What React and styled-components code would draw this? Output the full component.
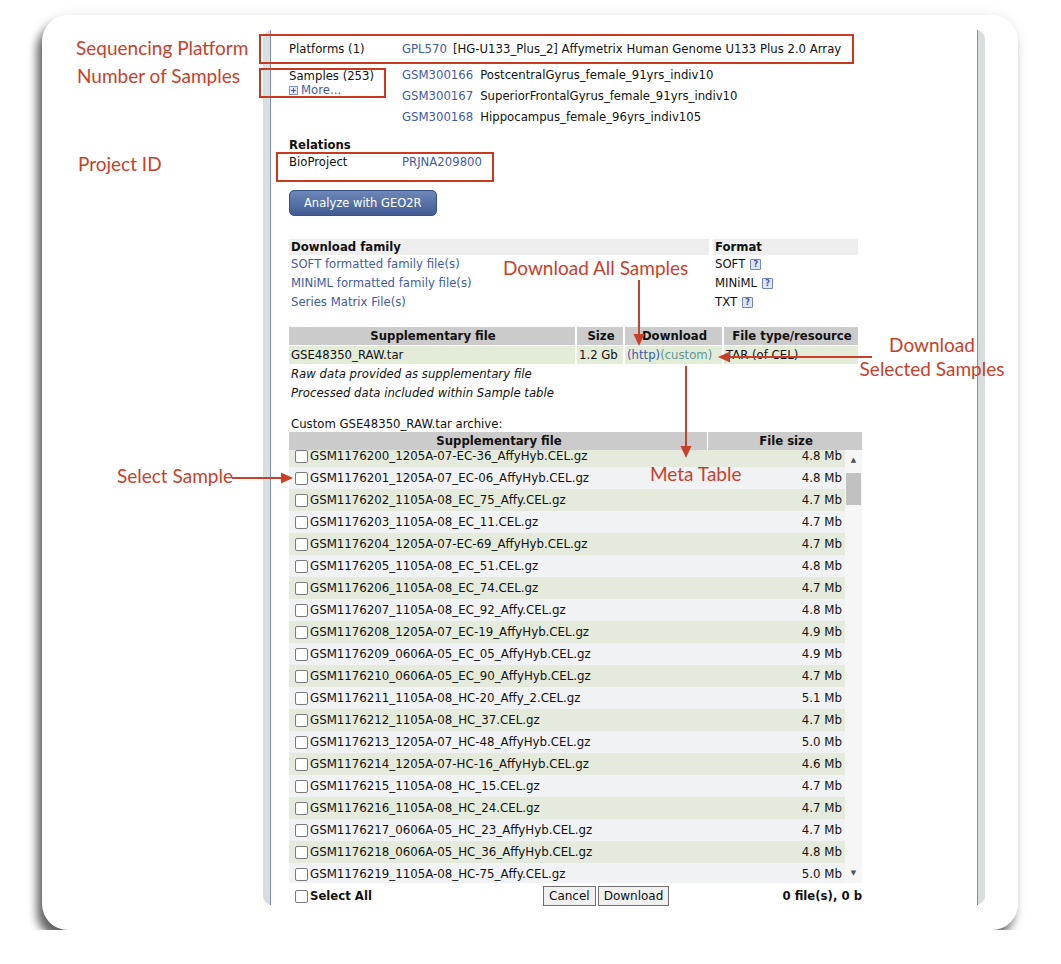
import React from "react";
import styled, { createGlobalStyle } from "styled-components";

const GlobalStyle = createGlobalStyle`
  html, body { margin: 0; padding: 0; background: #ffffff; }
  body {
    font-family: "DejaVu Sans", Verdana, sans-serif;
    font-size: 11.7px;
    color: #111;
  }
  * { box-sizing: border-box; }
`;

const RED = "#c9402a";
const LINK = "#3f5aa8";

const Card = styled.div`
  position: relative;
  width: 976px;
  height: 915px;
  margin: 15px 0 0 42px;
  padding: 15px 33px 25px 221px;
  background: #fff;
  border-radius: 26px;
  box-shadow: -5px 9px 10px rgba(0, 0, 0, 0.6), 0 0 14px rgba(0, 0, 0, 0.08);
`;

const Frame = styled.div`
  width: 722px;
  height: 875px;
  background: #d8dddd;
  border-radius: 9px;
  padding: 0 7px;
  display: flex;
`;

const Content = styled.div`
  flex: 1;
  background: #fff;
  border-left: 1px solid #7a8bcb;
  border-right: 1px solid #7a8bcb;
  padding: 9px 0 0 18px;
  display: flex;
  flex-direction: column;
  align-items: flex-start;
  & > * { flex-shrink: 0; }
`;

const DefRow = styled.div`
  display: grid;
  grid-template-columns: 113px auto;
  line-height: ${(p) => p.$lh || 20}px;
  margin-top: ${(p) => p.$mt || 0}px;
`;

const LabelCol = styled.div`
  padding-top: 4px;
  line-height: 14px;
`;

const MoreLink = styled.div`
  color: ${LINK};
  display: flex;
  align-items: center;
  gap: 3px;
`;

const PlusBox = styled.span`
  width: 9px;
  height: 9px;
  border: 1px solid #8094c4;
  background: #e4e9f5;
  position: relative;
  &::before, &::after {
    content: "";
    position: absolute;
    background: #3f5aa8;
  }
  &::before { left: 1px; right: 1px; top: 3px; height: 1px; }
  &::after { top: 1px; bottom: 1px; left: 3px; width: 1px; }
`;

const Link = styled.span`
  color: ${(p) => p.$color || LINK};
  margin-right: ${(p) => p.$mr || 0}px;
`;

const SectionTitle = styled.div`
  font-weight: bold;
  line-height: 17px;
  margin-top: 9px;
`;

const GeoButton = styled.div`
  margin-top: 19px;
  height: 26px;
  padding: 0 14px;
  display: flex;
  align-items: center;
  border-radius: 5px;
  border: 1px solid #34508a;
  background: linear-gradient(#6d87b8, #405c92);
  color: #fff;
  font-size: 11.5px;
`;

const FamilyTable = styled.div`
  margin-top: 23px;
  display: grid;
  grid-template-columns: 420px 145px;
  column-gap: 4px;
`;

const HeadCell = styled.div`
  background: ${(p) => p.$bg || "#eeeeee"};
  font-weight: bold;
  height: ${(p) => p.$h || 16}px;
  line-height: ${(p) => p.$h || 16}px;
  padding-left: 2px;
  text-align: ${(p) => p.$align || "left"};
`;

const Cell = styled.div`
  height: 19px;
  line-height: 19px;
  padding-left: 2px;
  display: flex;
  align-items: center;
  gap: 5px;
`;

const Help = styled.span`
  width: 11px;
  height: 11px;
  border: 1px solid #6d86c0;
  background: #dfe6f5;
  color: #3f5aa8;
  font-size: 8px;
  font-weight: bold;
  line-height: 9px;
  text-align: center;
  border-radius: 1px;
`;

const SuppTable = styled.div`
  margin-top: 15px;
  display: grid;
  grid-template-columns: 286px 46px 97px 134px;
  column-gap: 2px;
  row-gap: 1px;
`;

const DataCell = styled.div`
  background: #e3ebd9;
  height: 18px;
  line-height: 18px;
  padding-left: 2px;
  white-space: nowrap;
`;

const Note = styled.div`
  font-style: italic;
  line-height: 19px;
  padding-left: 2px;
  margin-top: ${(p) => p.$mt || 0}px;
`;

const Plain = styled.div`
  line-height: 16px;
  padding-left: 2px;
  margin-top: 13px;
`;

const MetaTable = styled.div`
  width: 573px;
  display: flex;
  flex-direction: column;
  & > * { flex-shrink: 0; }
`;

const MetaHead = styled.div`
  display: grid;
  grid-template-columns: 418px 1fr;
  column-gap: 1px;
`;

const ListArea = styled.div`
  display: flex;
  height: 433px;
`;

const Viewport = styled.div`
  width: 556px;
  overflow: hidden;
`;

const RowsInner = styled.div`
  margin-top: -5px;
`;

const FileRow = styled.div`
  height: 22px;
  display: flex;
  align-items: center;
  padding: 0 3px 0 6px;
  background: ${(p) => (p.$alt ? "#f1f2f4" : "#e4ebdc")};
  font-size: 11.8px;
`;

const Check = styled.span`
  width: 13px;
  height: 13px;
  border: 1px solid #7a7a7a;
  border-radius: 2px;
  background: #fff;
  margin-right: 2px;
  flex: none;
`;

const FileName = styled.span`
  flex: 1;
  white-space: nowrap;
`;

const Size = styled.span`
  white-space: nowrap;
`;

const Scrollbar = styled.div`
  width: 17px;
  background: #f6f6f6;
  display: flex;
  flex-direction: column;
  align-items: center;
`;

const ScrollArrow = styled.div`
  height: 20px;
  display: flex;
  align-items: center;
  justify-content: center;
  color: #505050;
  font-size: 7px;
`;

const Thumb = styled.div`
  width: 15px;
  height: 32px;
  margin-top: 3px;
  background: #c1c1c1;
`;

const Spacer = styled.div`
  flex: 1;
`;

const Footer = styled.div`
  display: grid;
  grid-template-columns: 254px auto 1fr;
  align-items: center;
  height: 26px;
`;

const SelectAll = styled.div`
  display: flex;
  align-items: center;
  padding-left: 6px;
  font-weight: bold;
`;

const Buttons = styled.div`
  display: flex;
  gap: 2px;
`;

const GrayButton = styled.div`
  height: 20px;
  padding: 0 ${(p) => p.$px || 5}px;
  border: 1px solid #707070;
  background: #f0f0f0;
  line-height: 18px;
  font-size: 12px;
`;

const Totals = styled.div`
  text-align: right;
  font-weight: bold;
`;

/* ---------- annotation overlay ---------- */

const Note2 = styled.div`
  position: absolute;
  left: ${(p) => p.$x}px;
  top: ${(p) => p.$y}px;
  width: ${(p) => (p.$w ? `${p.$w}px` : "auto")};
  font-family: Lato, "Open Sans", sans-serif;
  font-size: 19px;
  line-height: ${(p) => p.$lh || 22}px;
  color: ${RED};
  white-space: nowrap;
  text-align: ${(p) => p.$align || "left"};
`;

const RedBox = styled.div`
  position: absolute;
  left: ${(p) => p.$x}px;
  top: ${(p) => p.$y}px;
  width: ${(p) => p.$w}px;
  height: ${(p) => p.$h}px;
  border: 2px solid #c8391f;
`;

const ArrowSvg = styled.svg`
  position: absolute;
  left: ${(p) => p.$x}px;
  top: ${(p) => p.$y}px;
  overflow: visible;
`;

function Arrow({ x, y, len, dir }) {
  const head = 12;
  const half = 5.5;
  if (dir === "down") {
    return (
      <ArrowSvg $x={x - 6} $y={y} width="12" height={len}>
        <line x1="6" y1="0" x2="6" y2={len - head + 1} stroke={RED} strokeWidth="2" />
        <polygon points={`${6 - half},${len - head} ${6 + half},${len - head} 6,${len}`} fill={RED} />
      </ArrowSvg>
    );
  }
  if (dir === "left") {
    return (
      <ArrowSvg $x={x} $y={y - 6} width={len} height="12">
        <line x1={head - 1} y1="6" x2={len} y2="6" stroke={RED} strokeWidth="2" />
        <polygon points={`0,6 ${head},${6 - half} ${head},${6 + half}`} fill={RED} />
      </ArrowSvg>
    );
  }
  return (
    <ArrowSvg $x={x} $y={y - 6} width={len} height="12">
      <line x1="0" y1="6" x2={len - head + 1} y2="6" stroke={RED} strokeWidth="2" />
      <polygon points={`${len},6 ${len - head},${6 - half} ${len - head},${6 + half}`} fill={RED} />
    </ArrowSvg>
  );
}

const files = [
  ["GSM1176200_1205A-07-EC-36_AffyHyb.CEL.gz", "4.8 Mb"],
  ["GSM1176201_1205A-07_EC-06_AffyHyb.CEL.gz", "4.8 Mb"],
  ["GSM1176202_1105A-08_EC_75_Affy.CEL.gz", "4.7 Mb"],
  ["GSM1176203_1105A-08_EC_11.CEL.gz", "4.7 Mb"],
  ["GSM1176204_1205A-07-EC-69_AffyHyb.CEL.gz", "4.7 Mb"],
  ["GSM1176205_1105A-08_EC_51.CEL.gz", "4.8 Mb"],
  ["GSM1176206_1105A-08_EC_74.CEL.gz", "4.7 Mb"],
  ["GSM1176207_1105A-08_EC_92_Affy.CEL.gz", "4.8 Mb"],
  ["GSM1176208_1205A-07_EC-19_AffyHyb.CEL.gz", "4.9 Mb"],
  ["GSM1176209_0606A-05_EC_05_AffyHyb.CEL.gz", "4.9 Mb"],
  ["GSM1176210_0606A-05_EC_90_AffyHyb.CEL.gz", "4.7 Mb"],
  ["GSM1176211_1105A-08_HC-20_Affy_2.CEL.gz", "5.1 Mb"],
  ["GSM1176212_1105A-08_HC_37.CEL.gz", "4.7 Mb"],
  ["GSM1176213_1205A-07_HC-48_AffyHyb.CEL.gz", "5.0 Mb"],
  ["GSM1176214_1205A-07-HC-16_AffyHyb.CEL.gz", "4.6 Mb"],
  ["GSM1176215_1105A-08_HC_15.CEL.gz", "4.7 Mb"],
  ["GSM1176216_1105A-08_HC_24.CEL.gz", "4.7 Mb"],
  ["GSM1176217_0606A-05_HC_23_AffyHyb.CEL.gz", "4.7 Mb"],
  ["GSM1176218_0606A-05_HC_36_AffyHyb.CEL.gz", "4.8 Mb"],
  ["GSM1176219_1105A-08_HC-75_Affy.CEL.gz", "5.0 Mb"],
];

const samples = [
  ["GSM300166", "PostcentralGyrus_female_91yrs_indiv10"],
  ["GSM300167", "SuperiorFrontalGyrus_female_91yrs_indiv10"],
  ["GSM300168", "Hippocampus_female_96yrs_indiv105"],
];

const family = [
  ["SOFT formatted family file(s)", "SOFT"],
  ["MINiML formatted family file(s)", "MINiML"],
  ["Series Matrix File(s)", "TXT"],
];

export default function App() {
  return (
    <>
      <GlobalStyle />
      <Card>
        <Frame>
          <Content>
            <DefRow $lh={20}>
              <div>Platforms (1)</div>
              <div>
                <Link $mr={6}>GPL570</Link>[HG-U133_Plus_2] Affymetrix Human Genome U133 Plus 2.0 Array
              </div>
            </DefRow>
            <DefRow $lh={21} $mt={6}>
              <LabelCol>
                <div>Samples (253)</div>
                <MoreLink>
                  <PlusBox />
                  More...
                </MoreLink>
              </LabelCol>
              <div>
                {samples.map(([id, name]) => (
                  <div key={id}>
                    <Link $mr={7}>{id}</Link>
                    {name}
                  </div>
                ))}
              </div>
            </DefRow>
            <SectionTitle>Relations</SectionTitle>
            <DefRow $lh={17}>
              <div>BioProject</div>
              <Link>PRJNA209800</Link>
            </DefRow>
            <GeoButton>Analyze with GEO2R</GeoButton>

            <FamilyTable>
              <HeadCell>Download family</HeadCell>
              <HeadCell>Format</HeadCell>
              {family.map(([label, fmt]) => (
                <React.Fragment key={fmt}>
                  <Cell>
                    <Link>{label}</Link>
                  </Cell>
                  <Cell>
                    {fmt}
                    <Help>?</Help>
                  </Cell>
                </React.Fragment>
              ))}
            </FamilyTable>

            <SuppTable>
              <HeadCell $bg="#cbcbcb" $h={18} $align="center">Supplementary file</HeadCell>
              <HeadCell $bg="#cbcbcb" $h={18} $align="center">Size</HeadCell>
              <HeadCell $bg="#cbcbcb" $h={18} $align="center">Download</HeadCell>
              <HeadCell $bg="#cbcbcb" $h={18} $align="center">File type/resource</HeadCell>
              <DataCell>GSE48350_RAW.tar</DataCell>
              <DataCell>1.2 Gb</DataCell>
              <DataCell>
                <Link>(http)</Link>
                <Link $color="#5f9595">(custom)</Link>
              </DataCell>
              <DataCell>TAR (of CEL)</DataCell>
            </SuppTable>
            <Note $mt={1}>Raw data provided as supplementary file</Note>
            <Note>Processed data included within Sample table</Note>

            <Plain>Custom GSE48350_RAW.tar archive:</Plain>
            <MetaTable>
              <MetaHead>
                <HeadCell $bg="#cbcbcb" $h={18} $align="center">Supplementary file</HeadCell>
                <HeadCell $bg="#cbcbcb" $h={18} $align="center">File size</HeadCell>
              </MetaHead>
              <ListArea>
                <Viewport>
                  <RowsInner>
                    {files.map(([name, size], i) => (
                      <FileRow key={name} $alt={i % 2 === 1}>
                        <Check />
                        <FileName>{name}</FileName>
                        <Size>{size}</Size>
                      </FileRow>
                    ))}
                  </RowsInner>
                </Viewport>
                <Scrollbar>
                  <ScrollArrow>▲</ScrollArrow>
                  <Thumb />
                  <Spacer />
                  <ScrollArrow>▼</ScrollArrow>
                </Scrollbar>
              </ListArea>
              <Footer>
                <SelectAll>
                  <Check />
                  Select All
                </SelectAll>
                <Buttons>
                  <GrayButton $px={5}>Cancel</GrayButton>
                  <GrayButton $px={5}>Download</GrayButton>
                </Buttons>
                <Totals>0 file(s), 0 b</Totals>
              </Footer>
            </MetaTable>
          </Content>
        </Frame>

        {/* annotations */}
        <RedBox $x={217} $y={19} $w={595} $h={30} />
        <RedBox $x={217} $y={53} $w={127} $h={30} />
        <RedBox $x={234} $y={137} $w={218} $h={30} />

        <Note2 $x={34} $y={22}>Sequencing Platform</Note2>
        <Note2 $x={35} $y={50}>Number of Samples</Note2>
        <Note2 $x={36} $y={138}>Project ID</Note2>
        <Note2 $x={461} $y={242}>Download All Samples</Note2>
        <Note2 $x={815} $y={318} $w={150} $lh={24} $align="center">
          Download
          <br />
          Selected Samples
        </Note2>
        <Note2 $x={608} $y={448}>Meta Table</Note2>
        <Note2 $x={75} $y={450}>Select Sample</Note2>

        <Arrow x={597} y={265} len={66} dir="down" />
        <Arrow x={676} y={342} len={154} dir="left" />
        <Arrow x={644} y={351} len={92} dir="down" />
        <Arrow x={190} y={463} len={61} dir="right" />
      </Card>
    </>
  );
}
